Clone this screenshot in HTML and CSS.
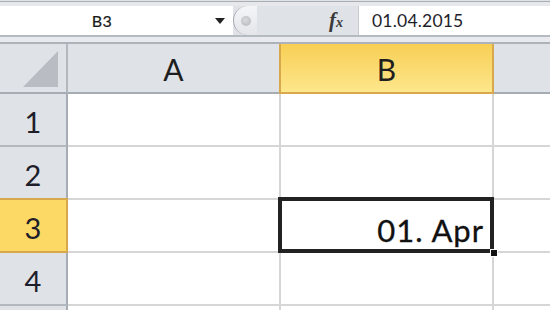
FILE: index.html
```html
<!DOCTYPE html>
<html>
<head>
<meta charset="utf-8">
<link rel="stylesheet" href="styles.css">
</head>
<body>
<div class="app">
  <div class="formula-bar">
    <div class="namebox">
      <span class="name">B3</span>
      <span class="caret"></span>
    </div>
    <div class="fx-area">
      <span class="pill"><span class="dot"></span></span>
      <span class="fx">f<span class="x">x</span></span>
    </div>
    <div class="input">01.04.2015</div>
  </div>
  <div class="band"></div>
  <div class="sheet">
    <div class="corner"><span class="tri"></span></div>
    <div class="colhead">A</div>
    <div class="colhead sel">B</div>
    <div class="colhead rest"></div>

    <div class="rowhead">1</div>
    <div class="cell"></div>
    <div class="cell"></div>
    <div class="cell last"></div>

    <div class="rowhead">2</div>
    <div class="cell"></div>
    <div class="cell"></div>
    <div class="cell last"></div>

    <div class="rowhead sel">3</div>
    <div class="cell"></div>
    <div class="cell active"><span class="val">01. Apr</span><span class="frame"></span><span class="handle"></span></div>
    <div class="cell last"></div>

    <div class="rowhead">4</div>
    <div class="cell"></div>
    <div class="cell"></div>
    <div class="cell last"></div>

    <div class="rowhead"></div>
    <div class="cell"></div>
    <div class="cell"></div>
    <div class="cell last"></div>
  </div>
</div>
</body>
</html>
```
FILE: styles.css
```css
html, body {
  margin: 0;
  padding: 0;
  background: #dfe2e7;
  overflow: hidden;
}
.app {
  width: 550px;
  height: 310px;
  overflow: hidden;
  font-family: Lato, "Open Sans", sans-serif;
  color: #1c1c1c;
  background: #dfe2e7;
}
.formula-bar {
  display: flex;
  height: 29px;
  margin-top: 6px;
  box-shadow: 0 -4px 0 #e6e8ec, 0 -5px 0 #a9aeb5;
}
.namebox {
  width: 233px;
  background: #fff;
  display: flex;
  align-items: center;
}
.name {
  width: 204px;
  text-align: center;
  font-size: 16px;
  color: #1a1a1a;
  letter-spacing: 0.4px;
  -webkit-text-stroke: 0.2px #1a1a1a;
}
.caret {
  width: 0;
  height: 0;
  border-left: 5px solid transparent;
  border-right: 5px solid transparent;
  border-top: 6px solid #222;
  margin-left: 11px;
  margin-top: 1px;
}
.fx-area {
  width: 125px;
  display: flex;
  align-items: center;
  background: #dfe2e7;
}
.pill {
  width: 24px;
  height: 29px;
  box-sizing: border-box;
  border-radius: 15px 0 0 15px;
  border-left: 1px solid #a6abb2;
  background: linear-gradient(#f4f5f7, #e3e5e9);
  display: flex;
  align-items: center;
  padding-left: 7px;
}
.dot {
  width: 10px;
  height: 10px;
  border-radius: 50%;
  background: radial-gradient(circle at 45% 40%, #d8dadd, #b1b5ba);
}
.fx {
  margin-left: 72px;
  font-family: "Liberation Serif", serif;
  font-style: italic;
  font-weight: bold;
  font-size: 21px;
  color: #3a3a3a;
  line-height: 1;
}
.fx .x {
  font-size: 14px;
}
.input {
  flex: 1;
  background: #fff;
  border-left: 1px solid #c6cad0;
  display: flex;
  align-items: center;
  padding-left: 13px;
  font-size: 17.5px;
  color: #1e1e2a;
  letter-spacing: 0.2px;
}
.band {
  height: 9px;
  box-sizing: border-box;
  border-top: 2px solid #b6bbc1;
  border-bottom: 2px solid #aeb3ba;
  background: #e8eaf0;
}
.sheet {
  display: grid;
  grid-template-columns: 68px 213px 213px 1fr;
  grid-template-rows: 50px 53px 53px 53px 53px 53px;
}
.sheet > div {
  box-sizing: border-box;
}
.corner {
  background: #dfe2e7;
  border-right: 2px solid #b3b8bf;
  border-bottom: 2px solid #a6acb3;
  position: relative;
}
.tri {
  position: absolute;
  right: 8px;
  bottom: 5px;
  width: 0;
  height: 0;
  border-left: 35px solid transparent;
  border-bottom: 36px solid #b9bdc3;
}
.colhead {
  background: #dfe2e7;
  border-right: 2px solid #b3b8bf;
  border-bottom: 2px solid #a6acb3;
  display: flex;
  align-items: center;
  justify-content: center;
  font-size: 30px;
  padding-top: 2px;
  color: #1e1e1e;
}
.colhead.sel {
  background: linear-gradient(#f8cf55, #fde68c);
  border-left: 2px solid #d8a84c;
  border-right: 2px solid #d8a84c;
  border-bottom: 2px solid #d8a84c;
  margin-left: -2px;
}
.colhead.rest {
  border-right: 0;
}
.rowhead {
  background: #dfe2e7;
  border-right: 2px solid #a6acb3;
  border-bottom: 2px solid #b3b8bf;
  display: flex;
  align-items: center;
  justify-content: center;
  font-size: 29px;
  padding-top: 4px;
  color: #1e1e2a;
}
.rowhead.sel {
  background: #fcd865;
  border-right: 2px solid #d8a84c;
  border-bottom: 2px solid #d8a84c;
  border-top: 2px solid #d8a84c;
  margin-top: -2px;
}
.cell {
  background: #fff;
  border-right: 2px solid #d6d6d6;
  border-bottom: 2px solid #d6d6d6;
  position: relative;
}
.cell.last {
  border-right: 0;
}
.cell.active {
  z-index: 2;
  display: flex;
  align-items: flex-end;
  justify-content: flex-end;
  padding: 0 8px 5px 0;
}
.val {
  font-size: 31px;
  letter-spacing: 1px;
  color: #111;
  line-height: 1;
  -webkit-text-stroke: 0.3px #111;
}
.frame {
  position: absolute;
  left: -3px;
  top: -3px;
  right: -2px;
  bottom: -2px;
  border: 4px solid #222;
}
.handle {
  position: absolute;
  right: -6px;
  bottom: -6px;
  width: 6px;
  height: 6px;
  background: #111;
  border: 1px solid #fff;
}
```
